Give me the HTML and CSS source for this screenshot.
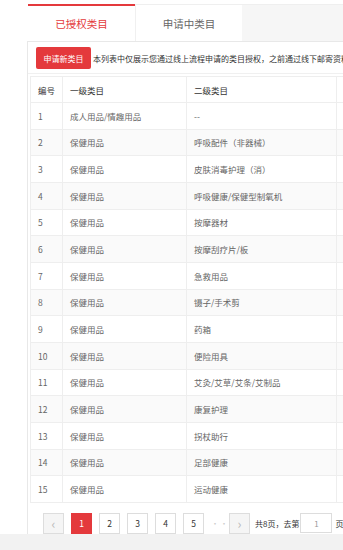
FILE: index.html
```html
<html lang="zh-CN">
<head>
    <meta charset="UTF-8">
    <meta name="viewport" content="width=device-width, initial-scale=1.0">
    <title>类目管理</title>
    <link rel="stylesheet" href="styles.css">
</head>
<body>
    <div class="page">
        <div class="tabs">
            <div class="tab active">已授权类目</div>
            <div class="tab">申请中类目</div>
        </div>
        <div class="panel">
            <div class="toolbar">
                <button class="btn-new">申请新类目</button>
                <span class="tip">本列表中仅展示您通过线上流程申请的类目授权，之前通过线下邮寄资料申请的类目授权不在此展示</span>
            </div>
            <table class="list">
                <colgroup>
                    <col class="c1"><col class="c2"><col class="c3"><col class="c4">
                </colgroup>
                <thead>
                    <tr><th>编号</th><th>一级类目</th><th>二级类目</th><th></th></tr>
                </thead>
                <tbody>
                    <tr><td>1</td><td>成人用品/情趣用品</td><td>--</td><td></td></tr>
                    <tr><td>2</td><td>保健用品</td><td>呼吸配件（非器械）</td><td></td></tr>
                    <tr><td>3</td><td>保健用品</td><td>皮肤消毒护理（消）</td><td></td></tr>
                    <tr><td>4</td><td>保健用品</td><td>呼吸健康/保健型制氧机</td><td></td></tr>
                    <tr><td>5</td><td>保健用品</td><td>按摩器材</td><td></td></tr>
                    <tr><td>6</td><td>保健用品</td><td>按摩刮疗片/板</td><td></td></tr>
                    <tr><td>7</td><td>保健用品</td><td>急救用品</td><td></td></tr>
                    <tr><td>8</td><td>保健用品</td><td>镊子/手术剪</td><td></td></tr>
                    <tr><td>9</td><td>保健用品</td><td>药箱</td><td></td></tr>
                    <tr><td>10</td><td>保健用品</td><td>便险用具</td><td></td></tr>
                    <tr><td>11</td><td>保健用品</td><td>艾灸/艾草/艾条/艾制品</td><td></td></tr>
                    <tr><td>12</td><td>保健用品</td><td>康复护理</td><td></td></tr>
                    <tr><td>13</td><td>保健用品</td><td>拐杖助行</td><td></td></tr>
                    <tr><td>14</td><td>保健用品</td><td>足部健康</td><td></td></tr>
                    <tr><td>15</td><td>保健用品</td><td>运动健康</td><td></td></tr>
                </tbody>
            </table>
            <div class="pager">
                <span class="pg arrow">&lsaquo;</span>
                <span class="pg current">1</span>
                <span class="pg">2</span>
                <span class="pg">3</span>
                <span class="pg">4</span>
                <span class="pg">5</span>
                <span class="dots">···</span>
                <span class="pg arrow next">&rsaquo;</span>
                <span class="total">共8页，去第</span>
                <input class="goto" type="text" value="1">
                <span class="total">页</span>
            </div>
        </div>
    </div>
    <div class="footer"></div>
</body>
</html>
```

FILE: styles.css
```css
*{
    box-sizing: border-box;
    margin: 0;
    padding: 0;
}
body{
    background-color: #f2f2f2;
    font-family: "Noto Sans CJK SC", "Liberation Sans", sans-serif;
    color: #666;
    overflow: hidden;
}
.page{
    background-color: #fff;
    height: 534px;
    padding: 4px 0 0 27px;
    overflow: hidden;
}
.tabs{
    display: flex;
    height: 37px;
    margin-left: 1px;
    background-color: #f6f6f6;
    border-top: 1px solid #efefef;
}
.tab{
    width: 107px;
    background-color: #fff;
    display: flex;
    align-items: center;
    justify-content: center;
    font-size: 10.5px;
    color: #666;
    border-left: 1px solid #f0f0f0;
}
.tab.active{
    color: #e4393c;
    border-top: 2px solid #e4393c;
    border-left: none;
    margin-top: -1px;
}
.panel{
    width: 360px;
    height: 493px;
    background-color: #fff;
    border: 1px solid #e8e8e8;
    border-bottom: none;
    overflow: hidden;
}
.toolbar{
    display: flex;
    align-items: center;
    padding: 5px 0 4px 8px;
    white-space: nowrap;
    border-bottom: 1px solid #f0f0f0;
}
.btn-new{
    width: 55px;
    height: 22px;
    flex-shrink: 0;
    background-color: #e4393c;
    color: #fff;
    border: none;
    border-radius: 2px;
    font-family: inherit;
    font-size: 8px;
}
.tip{
    margin-left: 2px;
    font-size: 8px;
    color: #333;
}
.list{
    margin: 2px 0 0 2px;
    width: 366px;
    table-layout: fixed;
    border-collapse: collapse;
    font-size: 8.5px;
}
.c1{ width: 32px; }
.c2{ width: 124px; }
.c3{ width: 150px; }
.c4{ width: 60px; }
.list th, .list td{
    text-align: left;
    padding: 0 7px;
    border: 1px solid #eeeeee;
    white-space: nowrap;
    vertical-align: middle;
}
.list th{
    color: #333;
    font-weight: normal;
    height: 26px;
}
.list td{
    height: 26.67px;
    color: #666;
}
.list tbody tr:nth-child(even){
    background-color: #fafafa;
}
.pager{
    display: flex;
    align-items: center;
    width: 400px;
    padding: 10px 0 0 15px;
    white-space: nowrap;
}
.pager > *{
    flex-shrink: 0;
}
.pg{
    width: 21px;
    height: 21px;
    margin-right: 7px;
    border: 1px solid #ddd;
    background-color: #fff;
    color: #333;
    font-size: 8.5px;
    display: flex;
    align-items: center;
    justify-content: center;
}
.pg.arrow{
    background-color: #f5f5f5;
    color: #bbb;
    font-size: 13px;
}
.pg.current{
    background-color: #e4393c;
    border-color: #e4393c;
    color: #fff;
}
.pg.next{
    margin-right: 5px;
}
.dots{
    width: 18px;
    color: #ccc;
    font-size: 8px;
    letter-spacing: 1px;
}
.total{
    font-size: 8px;
    color: #333;
}
.goto{
    width: 32px;
    height: 20px;
    margin: 0 3px 0 1px;
    border: 1px solid #ddd;
    text-align: center;
    font-family: inherit;
    font-size: 8px;
    color: #999;
    outline: none;
}
.footer{
    height: 16px;
}
```
